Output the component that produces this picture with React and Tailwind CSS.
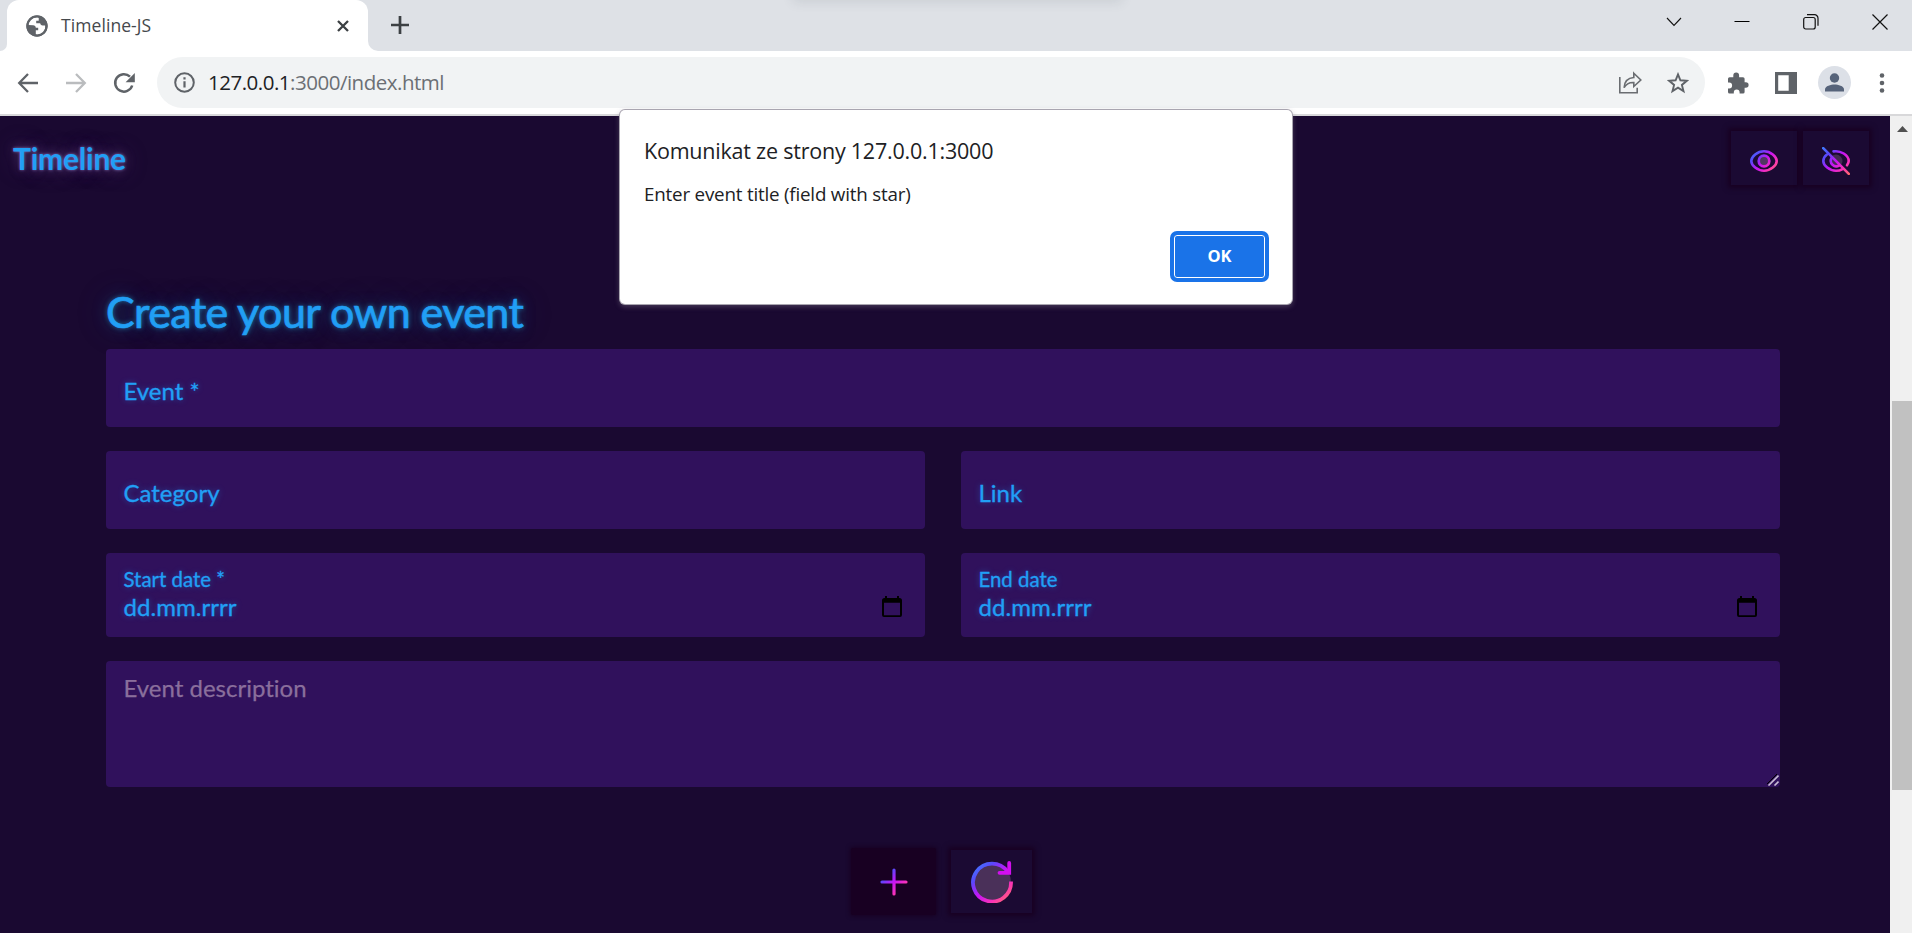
import React from "react";

const ui = "font-['Open_Sans','Noto_Sans',sans-serif]";
const glow = "[text-shadow:0_0_6px_rgba(33,150,243,0.45)] [-webkit-text-stroke:0.35px_#219ff5] [font-variant-ligatures:none]";

function Grad({ id, x1, y1, x2, y2 }) {
  return (
    <defs>
      <linearGradient id={id} gradientUnits="userSpaceOnUse" x1={x1} y1={y1} x2={x2} y2={y2}>
        <stop offset="0" stopColor="#3f7cff" />
        <stop offset="0.22" stopColor="#5a48fb" />
        <stop offset="0.5" stopColor="#c814f5" />
        <stop offset="0.78" stopColor="#fb35b4" />
        <stop offset="1" stopColor="#ff6a6a" />
      </linearGradient>
    </defs>
  );
}

function TabStrip() {
  return (
    <div className="flex h-[51px] bg-[#dee1e6]">
      <div className="flex w-[7px] bg-white">
        <div className="h-full w-full rounded-br-[10px] bg-[#dee1e6]" />
      </div>
      <div className="flex h-full w-[361px] items-center rounded-t-[12px] bg-white pl-[19px]">
        <svg width="22" height="22" viewBox="0 0 22 22" className="shrink-0">
          <circle cx="11" cy="11" r="10.6" fill="#5f6368" />
          <path d="M11.500 2.300C7 2 3 5.300 2.400 10l4.800.2c1.500 0 2.600 1 2.600 2.500h2.400v2.600H9.800v4.300c2.800.5 5.900-.6 7.700-2.900 1.500-1.900 2-4.200 1.700-6.200h-2.500c-1.500 0-2.500-1-2.500-2.200h-4V5.800h2.500c0-1.400.4-2.500-.5-3.500z" fill="#fff" />
          <circle cx="11" cy="11" r="9.6" fill="none" stroke="#5f6368" strokeWidth="2.2" />
        </svg>
        <span className={`${ui} ml-[13px] text-[17.5px] tracking-[0.08px] text-[#45484c]`}>Timeline-JS</span>
        <svg width="14" height="14" viewBox="0 0 14 14" className="ml-auto mr-[18px]">
          <path d="M2 2l10 10M12 2L2 12" stroke="#3c4043" strokeWidth="2.3" />
        </svg>
      </div>
      <div className="w-[10px] bg-white">
        <div className="h-full w-full rounded-bl-[10px] bg-[#dee1e6]" />
      </div>
      <svg width="18" height="18" viewBox="0 0 18 18" className="ml-[13px] mt-[16px]">
        <path d="M9 0v18M0 9h18" stroke="#3c4043" strokeWidth="2.7" />
      </svg>
      <div className="ml-auto mr-[24px] mt-[14px] flex h-[15px] items-center">
        <svg width="16" height="16" viewBox="0 0 16 16" className="mr-[52px]" fill="none" stroke="#111">
          <path d="M1 4l7 7.500L15 4" strokeWidth="1.1" />
        </svg>
        <svg width="16" height="16" viewBox="0 0 16 16" className="mr-[53px]">
          <path d="M.5 7.500h15" stroke="#000" />
        </svg>
        <svg width="16" height="16" viewBox="0 0 16 16" className="mr-[53px]" fill="none" stroke="#111">
          <rect x=".7" y="3.500" width="11.500" height="11.500" rx="2" strokeWidth="1.200" />
          <path d="M4 .7h7.500a3.500 3.500 0 0 1 3.500 3.500v7.500" strokeWidth="1.200" />
        </svg>
        <svg width="16" height="16" viewBox="0 0 16 16">
          <path d="M.5.5l15 15M15.500.5L.5 15.500" stroke="#111" strokeWidth="1.200" />
        </svg>
      </div>
    </div>
  );
}

function Toolbar() {
  return (
    <div className="flex h-[65px] items-start border-b-2 border-[#d8d8da] bg-white">
      <div className="flex h-[63px] w-[157px] items-center pl-[16px]">
        <svg width="24" height="24" viewBox="0 0 24 24" fill="none" stroke="#5f6368" strokeWidth="2.3">
          <path d="M22 12H3.500M12 3L3.200 12 12 21" />
        </svg>
        <svg width="24" height="24" viewBox="0 0 24 24" fill="none" stroke="#babcbe" strokeWidth="2.3" className="ml-[24px]">
          <path d="M2 12h18.500M12 3l8.800 9L12 21" />
        </svg>
        <svg width="24" height="24" viewBox="0 0 24 24" fill="none" className="ml-[24px]">
          <path d="M20.200 14.500A8.700 8.700 0 1 1 18 5.700" stroke="#5f6368" strokeWidth="2.500" />
          <path d="M22.800 2v9.200h-9.200z" fill="#5f6368" />
        </svg>
      </div>
      <div className="mt-[6px] flex h-[51px] w-[1548px] items-center rounded-full bg-[#f1f3f4] pl-[17px] pr-[16px]">
        <svg width="21" height="21" viewBox="0 0 21 21">
          <circle cx="10.500" cy="10.500" r="9.300" fill="none" stroke="#5f6368" strokeWidth="2" />
          <path d="M10.500 9.200v6.300M10.500 5.200v2.200" stroke="#5f6368" strokeWidth="2.200" />
        </svg>
        <span className={`${ui} ml-[13px] text-[20.5px] tracking-[-0.49px] text-[#6b6f74]`}>
          <span className="text-[#202124]">127.0.0.1</span>:3000/index.html
        </span>
        <svg width="24" height="24" viewBox="0 0 24 24" fill="none" stroke="#6a6d71" strokeWidth="1.600" className="ml-auto mr-[25px]">
          <path d="M1.800 6v15.700h17.400v-5" />
          <path d="M15.800 2.200l7 6.800-7 6.500v-4c-4.500-.2-7.500 1-9.700 5.200.3-5.500 3.500-9.800 9.700-10.200z" />
        </svg>
        <svg width="22" height="22" viewBox="0 0 22 22" fill="none" stroke="#5f6368" strokeWidth="1.900">
          <path d="M11 2.400l2.400 5.900 6.400.5-4.900 4.100 1.600 6.200L11 15.700l-5.500 3.400 1.600-6.200-4.900-4.100 6.400-.5z" />
        </svg>
      </div>
      <div className="flex h-[63px] flex-1 items-center">
        <svg width="22" height="22" viewBox="0 0 22 22" fill="#5f6368" className="ml-[22px]">
          <path d="M1 6.800Q1 5.200 2.600 5.200H6.300V3.400a2.900 2.900 0 0 1 5.800 0V5.200H16Q17.600 5.200 17.600 6.800V10.200H18.800a2.800 2.800 0 0 1 0 5.600H17.600V20Q17.600 21.600 16 21.600H12.600V20.400a2.900 2.900 0 0 0-5.800 0V21.600H2.600Q1 21.600 1 20V16.400H2.200a2.900 2.900 0 0 0 0-5.800H1z" />
        </svg>
        <svg width="22" height="22" viewBox="0 0 22 22" className="ml-[26px]">
          <path d="M0 0h22v22H0zM3.200 3.200v15.600h10.500V3.200z" fillRule="evenodd" fill="#5f6368" />
        </svg>
        <svg width="33" height="33" viewBox="0 0 33 33" className="ml-[21px]">
          <circle cx="16.500" cy="16.500" r="16.500" fill="#dce0e7" />
          <circle cx="16.500" cy="12" r="4.700" fill="#56637a" />
          <path d="M7 25.500v-2.300c0-3.300 6-4.800 9.500-4.800s9.500 1.500 9.500 4.800v2.300z" fill="#56637a" />
        </svg>
        <svg width="6" height="22" viewBox="0 0 6 22" fill="#5f6368" className="ml-[28px]">
          <circle cx="3" cy="3.500" r="2.300" /><circle cx="3" cy="11" r="2.300" /><circle cx="3" cy="18.500" r="2.300" />
        </svg>
      </div>
    </div>
  );
}

const neon = "shadow-[0_0_5px_3px_#180022]";

function Header() {
  return (
    <header className="flex h-[85px] items-start justify-between pl-[13px] pr-[21px]">
      <h1 className="mt-[23px] text-[30px] font-bold leading-[38px] tracking-[-0.22px] text-[#219ff5] [text-shadow:0_0_3px_rgba(190,170,255,0.6),0_0_12px_rgba(180,150,220,0.35),0_0_24px_rgba(120,80,150,0.4)]">
        Timeline
      </h1>
      <div className="mt-[15px] flex gap-[6px]">
        <button className={`flex h-[54px] w-[66px] items-center justify-center bg-[#1b0a33] pt-[6px] ${neon}`}>
          <svg width="28" height="28" viewBox="0 0 28 28" fill="none" strokeWidth="2.600">
            <Grad id="g1" x1="2" y1="3" x2="26" y2="25" />
            <path d="M1.300 14C1.300 9.500 7.500 4.200 14 4.200S26.700 9.500 26.700 14 20.500 23.800 14 23.800 1.300 18.500 1.300 14z" stroke="url(#g1)" />
            <circle cx="14" cy="14" r="5.300" fill="#513661" stroke="url(#g1)" strokeWidth="2.700" />
          </svg>
        </button>
        <button className={`flex h-[54px] w-[66px] items-center justify-center bg-[#1b0a33] pt-[6px] ${neon}`}>
          <svg width="28" height="28" viewBox="0 0 28 28" fill="none" strokeWidth="2.600" strokeLinecap="round">
            <Grad id="g2" x1="0" y1="1" x2="28" y2="27" />
            <circle cx="14" cy="14" r="6.500" fill="#432b53" />
            <g stroke="url(#g2)">
              <path d="M11.500 4.400C18.500 3.200 26.700 8 26.700 14c0 1.600-.8 3-1.700 4.300" />
              <path d="M5 7.500C2.500 9.300 1.300 11.500 1.300 14c0 4.500 6.200 9.800 12.700 9.800 2.500 0 4.600-.6 6.500-1.700" />
              <path d="M9.700 10.700a5.500 5.500 0 0 0 7.600 7.600" />
              <path d="M1.200 1.200l25.600 25.600" />
            </g>
          </svg>
        </button>
      </div>
    </header>
  );
}

function Field({ label }) {
  return (
    <div className={`flex h-[78px] flex-1 items-center rounded-[4px] bg-[#30115c] pl-[17.5px] pt-[6px] text-[24px] text-[#219ff5] ${glow}`}>
      {label}
    </div>
  );
}

function DateField({ label }) {
  return (
    <div className={`flex h-[84px] flex-1 justify-between rounded-[4px] bg-[#30115c] pl-[17.5px] pr-[22px] text-[#219ff5] ${glow}`}>
      <div className="pt-[13px]">
        <div className="text-[20.4px] leading-[26px]">{label}</div>
        <div className="text-[24px] leading-[30px] tracking-[0.05px]">dd.mm.rrrr</div>
      </div>
      <svg width="22" height="22" viewBox="0 0 22 22" className="mt-[43px]">
        <path d="M1 4.500Q1 2 3.500 2H4V0h2v2h10V0h2v2h.5Q21 2 21 4.500V19q0 2-2 2H3q-2 0-2-2zM3 6.700V19.200h16V6.700z" fillRule="evenodd" fill="#000" />
      </svg>
    </div>
  );
}

function EventForm() {
  return (
    <section className="pl-[106px] pr-[110px] pt-[81px]">
      <h2 className="h-[67px] text-[43px] leading-[60px] tracking-[-0.57px] text-[#219ff5] [-webkit-text-stroke:0.7px_#219ff5] [text-shadow:0_0_5px_rgba(35,190,240,0.6),0_0_16px_rgba(30,120,170,0.45),0_0_36px_rgba(30,110,160,0.3)]">
        Create your own event
      </h2>
      <div className="flex flex-col gap-6">
        <div className="flex"><Field label="Event *" /></div>
        <div className="flex gap-9"><Field label="Category" /><Field label="Link" /></div>
        <div className="flex gap-9"><DateField label="Start date *" /><DateField label="End date" /></div>
        <div className="flex h-[126px] items-start justify-between rounded-[4px] bg-[#30115c] pl-[17.5px] pt-[11px] text-[24px] leading-[32px] text-[#8a6f9c] [-webkit-text-stroke:0.25px_#8a6f9c] [font-variant-ligatures:none]">
          Event description
          <svg width="12" height="12" viewBox="0 0 12 12" className="mr-[1px] mb-[1px] self-end" fill="none" strokeWidth="1.600">
            <path d="M0 10L10 0" stroke="#000" strokeWidth="1" />
            <path d="M1.500 11.500L11.500 1.500M7.500 11.500l4-4" stroke="#c9bdd6" />
          </svg>
        </div>
      </div>
      <div className="flex gap-[15px] pl-[745px] pt-[63px]">
        <button className="-mt-[2px] flex h-[67px] w-[85px] items-center justify-center rounded-[2px] bg-[#180022] shadow-[0_0_4px_1px_#180022]">
          <svg width="28" height="28" viewBox="0 0 28 28" strokeWidth="3.200" strokeLinecap="round">
            <Grad id="g3" x1="2" y1="2" x2="26" y2="26" />
            <path d="M14 2v24M2 14h24" stroke="url(#g3)" fill="none" />
          </svg>
        </button>
        <button className={`flex h-[63px] w-[81px] items-center justify-center bg-[#1b0a33] ${neon}`}>
          <svg width="42" height="42" viewBox="0 0 42 42" fill="none" strokeWidth="3.800" strokeLinecap="round">
            <Grad id="g4" x1="4" y1="4" x2="38" y2="40" />
            <circle cx="21" cy="21" r="19" fill="#4a3059" />
            <path d="M40 20.500A19 19 0 1 1 36.500 10.500" stroke="url(#g4)" strokeLinecap="butt" />
            <path d="M38.200 2v9.800H28.500" stroke="#d20fee" />
          </svg>
        </button>
      </div>
    </section>
  );
}

function Alert() {
  return (
    <div className={`${ui} absolute left-[620px] top-[110px] flex h-[194px] w-[672px] flex-col rounded-[5px] bg-white px-[24px] text-[#202124] shadow-[0_0_0_1px_#a9a5b0,0_2px_5px_1px_rgba(120,110,130,0.45)]`}>
      <div className="pt-[26px] text-[21.5px] leading-[30px] tracking-[-0.22px]">Komunikat ze strony 127.0.0.1:3000</div>
      <div className="pt-[15px] text-[18.8px] leading-[26px] tracking-[-0.2px]">Enter event title (field with star)</div>
      <button className="ml-auto mr-[2px] mt-[27px] flex h-[45px] w-[93px] items-center justify-center rounded-[4px] border border-[#1a73e8] bg-[#1a73e8] text-[16.5px] font-bold text-white shadow-[inset_0_0_0_1px_#fff,0_0_0_3px_#1a73e8]">
        OK
      </button>
    </div>
  );
}

export default function App() {
  return (
    <div className="relative flex h-[933px] w-[1912px] flex-col overflow-hidden bg-white">
      <TabStrip />
      <Toolbar />
      <div className="flex h-[817px]">
        <main className="w-[1890px] overflow-hidden bg-[#1a0931] font-['Lato',sans-serif]">
          <Header />
          <EventForm />
        </main>
        <div className="flex w-[22px] flex-col bg-[#f0f0f0] pl-[2px]">
          <svg width="20" height="18" viewBox="0 0 20 18"><path d="M5 16l5.500-6 5.500 6z" fill="#505050" /></svg>
          <div className="mt-[267px] h-[389px] w-[20px] bg-[#c1c1c1]" />
        </div>
      </div>
      <Alert />
      <div className="absolute left-[795px] top-[-10px] h-[10px] w-[325px] shadow-[0_0_12px_2px_rgba(60,70,85,0.12)]" />
    </div>
  );
}
